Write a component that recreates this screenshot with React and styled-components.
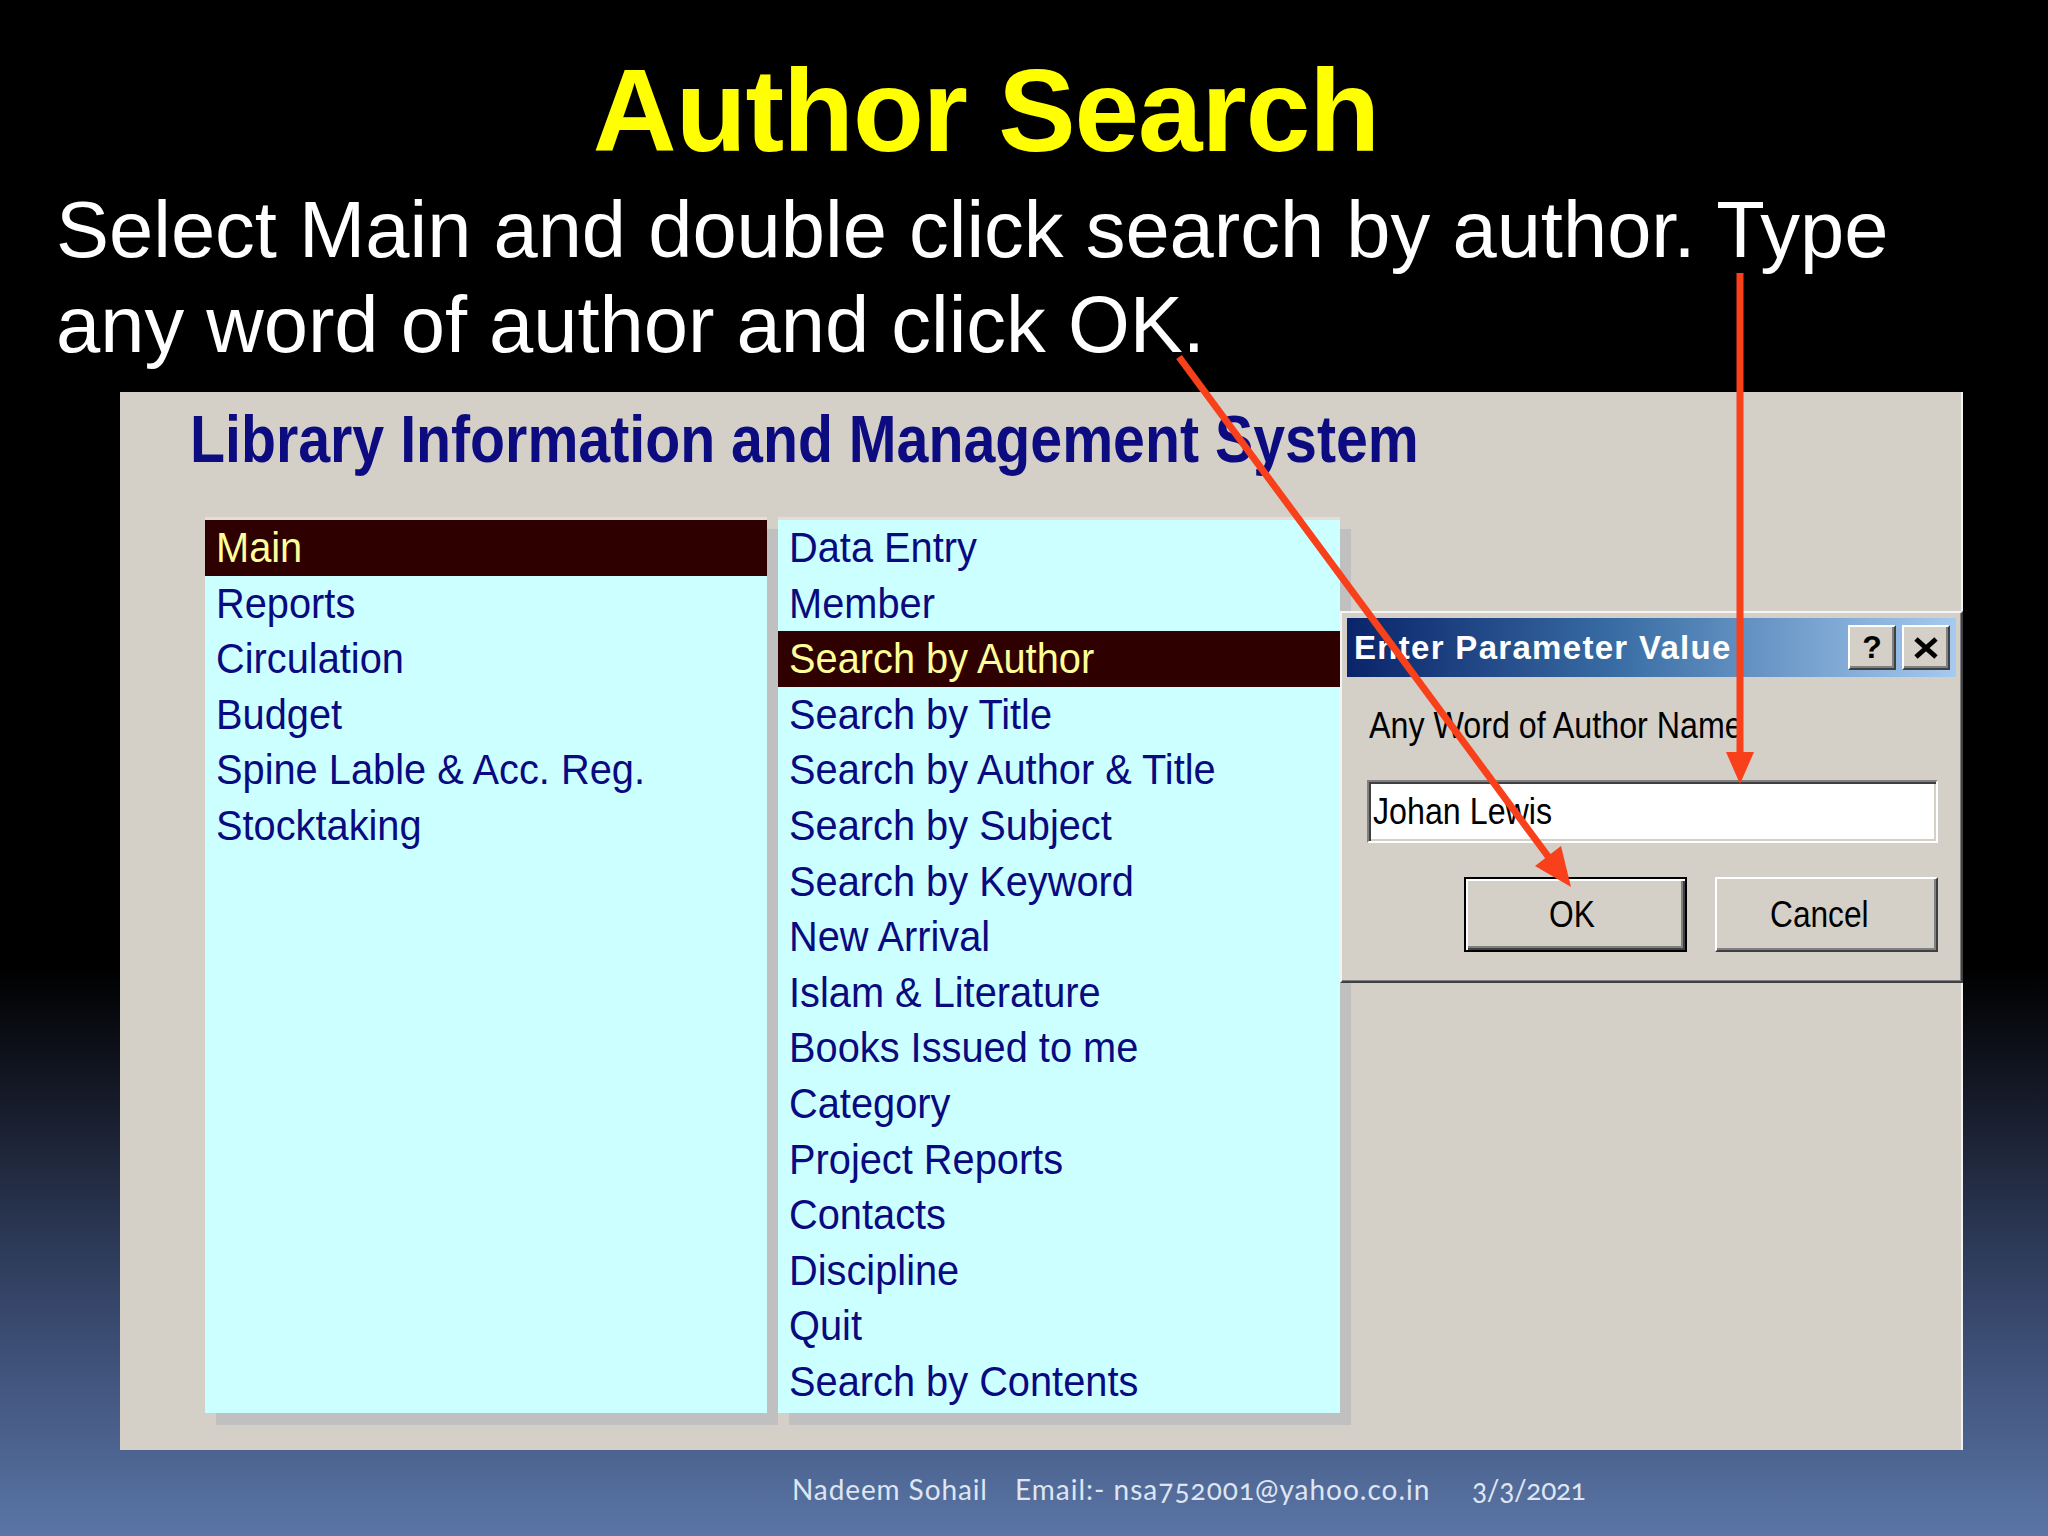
import React from 'react';
import styled, { createGlobalStyle } from 'styled-components';

const GlobalStyle = createGlobalStyle`
  html, body { margin: 0; padding: 0; background: #000; }
  #root { width: 2048px; height: 1536px; }
`;

const Slide = styled.div`
  position: relative;
  width: 2048px;
  height: 1536px;
  overflow: hidden;
  box-sizing: border-box;
  padding-top: 53px;
  display: flex;
  flex-direction: column;
  font-family: "Liberation Sans", Arial, sans-serif;
  background: linear-gradient(
    to bottom,
    #000 0%,
    #000 63%,
    #171c2b 72%,
    #36466a 85%,
    #5a75a6 100%
  );
`;

const Title = styled.h1`
  margin: 0;
  padding-right: 76px;
  text-align: center;
  color: #ffff00;
  font-size: 116px;
  line-height: 116px;
  font-weight: 700;
  letter-spacing: -1px;
`;

const Lead = styled.p`
  margin: 13px 0 0;
  padding-left: 56px;
  color: #fff;
  font-size: 79.5px;
  line-height: 95px;
  white-space: nowrap;
`;

const Panel = styled.div`
  position: relative;
  margin: 20px 0 0 120px;
  width: 1843px;
  height: 1058px;
  box-sizing: border-box;
  padding: 14px 0 0 70px;
  background: #d4d0c8;
  border-right: 2px solid #f2f2f2;
`;

const PanelTitle = styled.h2`
  margin: 0;
  font-size: 66px;
  line-height: 66px;
  font-weight: 700;
  color: #0c0c80;
  white-space: nowrap;
  transform: scaleX(0.868);
  transform-origin: left center;
`;

const Lists = styled.div`
  margin: 45px 0 0 15px;
  display: flex;
  gap: 11px;
  align-items: flex-start;
`;

const List = styled.div`
  width: 562px;
  height: 896px;
  box-sizing: border-box;
  border-top: 3px solid #e2dfda;
  background: #ccffff;
  box-shadow: 11px 12px 0 #c0c0c0;
  display: flex;
  flex-direction: column;
  position: relative;
`;

const Item = styled.div`
  height: 55.6px;
  line-height: 55.6px;
  padding-left: 11px;
  font-size: 43px;
  background: ${(p) => (p.$selected ? '#2e0000' : 'transparent')};
  color: ${(p) => (p.$selected ? '#ffff99' : '#0a0a80')};
`;

const Narrow = styled.span`
  display: inline-block;
  white-space: nowrap;
  transform: scaleX(${(p) => p.$sx || 0.88});
  transform-origin: left center;
`;

const Dialog = styled.div`
  position: absolute;
  top: 219px;
  right: -2px;
  width: 623px;
  box-sizing: border-box;
  padding: 5px;
  background: #d4d0c8;
  border: 2px solid;
  border-color: #f4f4f4 #404040 #404040 #f4f4f4;
  box-shadow: inset -1px -1px 0 #808080;
`;

const TitleBar = styled.div`
  height: 59px;
  display: flex;
  align-items: center;
  justify-content: space-between;
  padding: 0 6px 0 7px;
  background: linear-gradient(to right, #0a246a 0%, #3a6ea5 45%, #a6caf0 100%);
`;

const TitleText = styled.span`
  color: #fff;
  font-size: 33px;
  font-weight: 700;
  letter-spacing: 1.3px;
  white-space: nowrap;
`;

const CaptionButtons = styled.div`
  display: flex;
  gap: 6px;
`;

const CaptionButton = styled.div`
  width: 48px;
  height: 45px;
  box-sizing: border-box;
  display: flex;
  align-items: center;
  justify-content: center;
  background: #d4d0c8;
  border: 2px solid;
  border-color: #fff #404040 #404040 #fff;
  box-shadow: inset -2px -2px 0 #808080;
  color: #000;
  font-size: 32px;
  font-weight: 700;
`;

const DialogBody = styled.div`
  padding: 29px 18px 24px 20px;
`;

const Label = styled.div`
  margin-left: 2px;
  font-size: 36px;
  line-height: 40px;
  color: #000;
`;

const TextField = styled.div`
  margin-top: 34px;
  height: 63px;
  box-sizing: border-box;
  display: flex;
  align-items: center;
  padding-left: 4px;
  background: #fff;
  border: 2px solid;
  border-color: #808080 #fff #fff #808080;
  box-shadow: inset 2px 2px 0 #404040, inset -2px -2px 0 #d4d0c8;
  font-size: 36px;
  line-height: 40px;
  color: #000;
`;

const ButtonRow = styled.div`
  margin-top: 34px;
  display: flex;
  justify-content: flex-end;
  gap: 28px;
`;

const Button = styled.div`
  width: 223px;
  height: 75px;
  box-sizing: border-box;
  display: flex;
  align-items: center;
  justify-content: center;
  background: #d4d0c8;
  font-size: 36px;
  color: #000;
  border: 2px solid;
  border-color: ${(p) => (p.$default ? '#000' : '#fff #404040 #404040 #fff')};
  box-shadow: ${(p) =>
    p.$default
      ? 'inset 2px 2px 0 #fff, inset -2px -2px 0 #404040, inset -4px -4px 0 #808080'
      : 'inset -2px -2px 0 #808080'};
`;

const Arrows = styled.svg`
  position: absolute;
  left: 0;
  top: 0;
  width: 2048px;
  height: 1536px;
  pointer-events: none;
`;

const Footer = styled.div`
  margin-top: 22px;
  padding-left: 792px;
  display: flex;
  font-family: Lato, "Open Sans", sans-serif;
  font-size: 28px;
  line-height: 34px;
  color: #dde6f2;
  white-space: nowrap;
  font-variant-numeric: oldstyle-nums;
`;

const FooterCell = styled.span`
  width: ${(p) => p.$w}px;
  letter-spacing: ${(p) => p.$ls}px;
`;

const leftItems = ['Main', 'Reports', 'Circulation', 'Budget', 'Spine Lable & Acc. Reg.', 'Stocktaking'];
const rightItems = [
  'Data Entry',
  'Member',
  'Search by Author',
  'Search by Title',
  'Search by Author & Title',
  'Search by Subject',
  'Search by Keyword',
  'New Arrival',
  'Islam & Literature',
  'Books Issued to me',
  'Category',
  'Project Reports',
  'Contacts',
  'Discipline',
  'Quit',
  'Search by Contents',
];

export default function App() {
  return (
    <>
      <GlobalStyle />
      <Slide>
        <Title>Author Search</Title>
        <Lead>
          Select Main and double click search by author. Type
          <br />
          any word of author and click OK.
        </Lead>
        <Panel>
          <PanelTitle>Library Information and Management System</PanelTitle>
          <Lists>
            <List>
              {leftItems.map((t) => (
                <Item key={t} $selected={t === 'Main'}>
                  <Narrow $sx={0.925}>{t}</Narrow>
                </Item>
              ))}
            </List>
            <List>
              {rightItems.map((t) => (
                <Item key={t} $selected={t === 'Search by Author'}>
                  <Narrow $sx={0.925}>{t}</Narrow>
                </Item>
              ))}
            </List>
          </Lists>
          <Dialog>
            <TitleBar>
              <TitleText>Enter Parameter Value</TitleText>
              <CaptionButtons>
                <CaptionButton>?</CaptionButton>
                <CaptionButton>
                  <svg width="26" height="22" viewBox="0 0 26 22">
                    <path d="M3 2 L23 20 M23 2 L3 20" stroke="#000" strokeWidth="5" />
                  </svg>
                </CaptionButton>
              </CaptionButtons>
            </TitleBar>
            <DialogBody>
              <Label>
                <Narrow $sx={0.895}>Any Word of Author Name</Narrow>
              </Label>
              <TextField>
                <Narrow $sx={0.895}>Johan Lewis</Narrow>
              </TextField>
              <ButtonRow>
                <Button $default>
                  <Narrow $sx={0.88}>OK</Narrow>
                </Button>
                <Button>
                  <Narrow $sx={0.88}>Cancel</Narrow>
                </Button>
              </ButtonRow>
            </DialogBody>
          </Dialog>
        </Panel>
        <Footer>
          <FooterCell $w={223} $ls={0.9}>Nadeem Sohail</FooterCell>
          <FooterCell $w={457} $ls={1.0}>Email:- nsa752001@yahoo.co.in</FooterCell>
          <FooterCell $w={120} $ls={-0.3}>3/3/2021</FooterCell>
        </Footer>
        <Arrows viewBox="0 0 2048 1536">
          <g stroke="#f8401a" strokeWidth="7" fill="none" strokeLinecap="butt">
            <line x1="1179" y1="357" x2="1550" y2="859" />
            <line x1="1740" y1="273" x2="1740" y2="756" />
          </g>
          <g fill="#f8401a">
            <polygon points="1571,887 1535,866 1561,846" />
            <polygon points="1740,784 1726,752 1754,752" />
          </g>
        </Arrows>
      </Slide>
    </>
  );
}
